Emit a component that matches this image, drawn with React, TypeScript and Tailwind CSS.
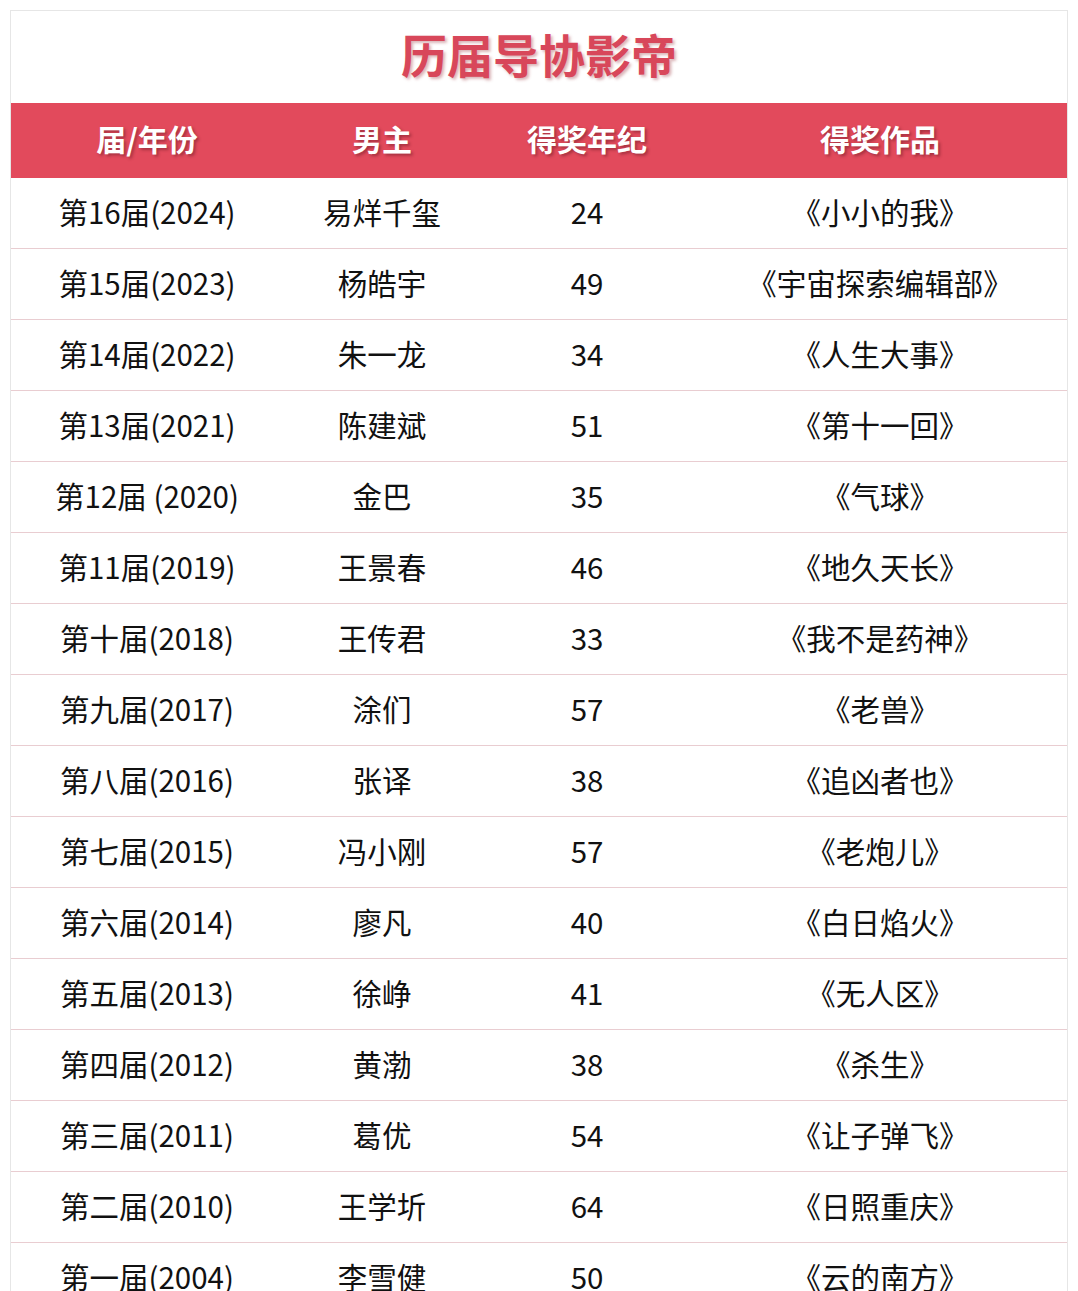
import React from "react";

type Row = { term: string; actor: string; age: string; work: string };

const rows: Row[] = [
  { term: "第16届(2024)", actor: "易烊千玺", age: "24", work: "《小小的我》" },
  { term: "第15届(2023)", actor: "杨皓宇", age: "49", work: "《宇宙探索编辑部》" },
  { term: "第14届(2022)", actor: "朱一龙", age: "34", work: "《人生大事》" },
  { term: "第13届(2021)", actor: "陈建斌", age: "51", work: "《第十一回》" },
  { term: "第12届 (2020)", actor: "金巴", age: "35", work: "《气球》" },
  { term: "第11届(2019)", actor: "王景春", age: "46", work: "《地久天长》" },
  { term: "第十届(2018)", actor: "王传君", age: "33", work: "《我不是药神》" },
  { term: "第九届(2017)", actor: "涂们", age: "57", work: "《老兽》" },
  { term: "第八届(2016)", actor: "张译", age: "38", work: "《追凶者也》" },
  { term: "第七届(2015)", actor: "冯小刚", age: "57", work: "《老炮儿》" },
  { term: "第六届(2014)", actor: "廖凡", age: "40", work: "《白日焰火》" },
  { term: "第五届(2013)", actor: "徐峥", age: "41", work: "《无人区》" },
  { term: "第四届(2012)", actor: "黄渤", age: "38", work: "《杀生》" },
  { term: "第三届(2011)", actor: "葛优", age: "54", work: "《让子弹飞》" },
  { term: "第二届(2010)", actor: "王学圻", age: "64", work: "《日照重庆》" },
  { term: "第一届(2004)", actor: "李雪健", age: "50", work: "《云的南方》" },
];

const cols = "grid grid-cols-[272px_198px_212px_1fr]";

export default function App() {
  return (
    <div className="h-[1291px] overflow-hidden bg-white pt-[10px] px-[10px] font-['Noto_Sans_CJK_SC','Noto_Sans',sans-serif]">
      <div className="border border-[#e6e6e6] border-b-0">
        <div className="h-[92px] flex items-center justify-center pb-[8px]">
          <h1 className="text-[46px] font-bold text-[#d8475a] [text-shadow:2px_2px_3px_rgba(150,40,50,0.35)]">
            历届导协影帝
          </h1>
        </div>
        <div className={`${cols} h-[75px] items-center bg-[#e24a5c] text-white text-[30px] font-bold pb-[4px] [text-shadow:2px_2px_3px_rgba(90,20,30,0.45)]`}>
          <div className="text-center">届/年份</div>
          <div className="text-center">男主</div>
          <div className="text-center">得奖年纪</div>
          <div className="text-center">得奖作品</div>
        </div>
        {rows.map((r) => (
          <div
            key={r.term}
            className={`${cols} h-[71px] items-center border-b border-[#e9cdd1] text-[29.5px] text-[#111] pb-[4px]`}
          >
            <div className="text-center">{r.term}</div>
            <div className="text-center">{r.actor}</div>
            <div className="text-center">{r.age}</div>
            <div className="text-center">{r.work}</div>
          </div>
        ))}
      </div>
    </div>
  );
}
